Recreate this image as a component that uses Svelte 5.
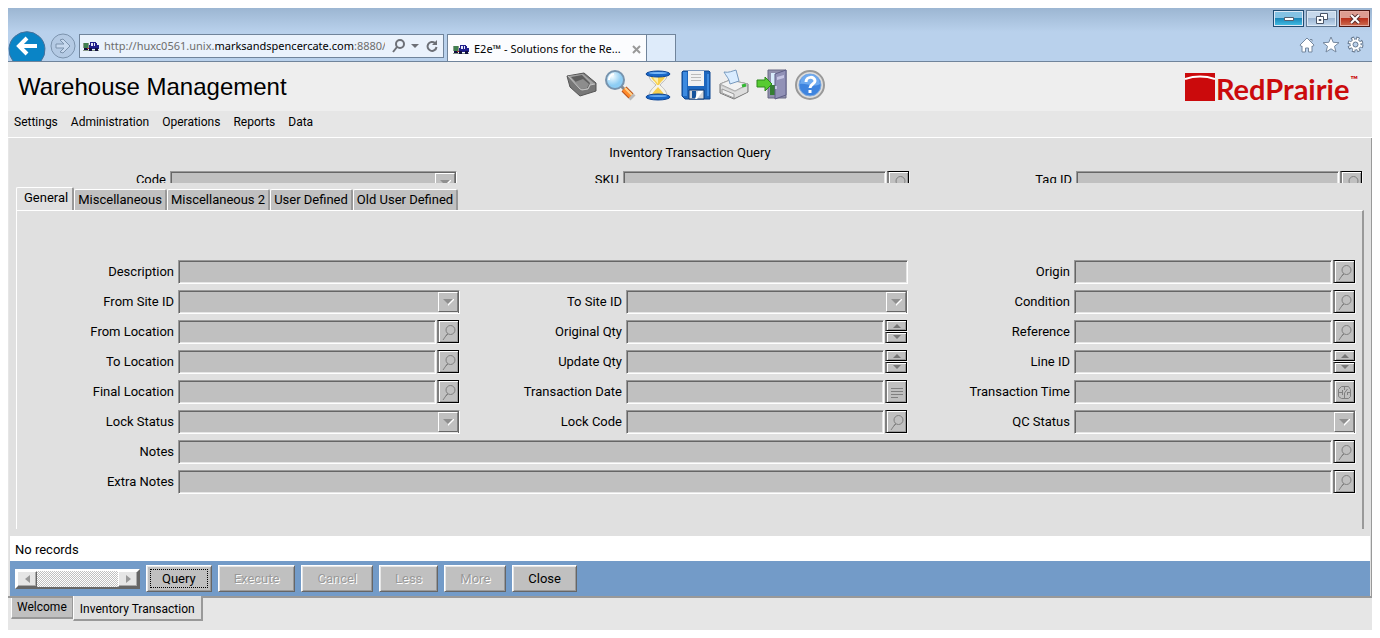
<script>
  const searchFields = [
    { id: 'code', label: 'Code', kind: 'select' },
    { id: 'sku', label: 'SKU', kind: 'lookup' },
    { id: 'tag', label: 'Tag ID', kind: 'lookup' }
  ];
  const fields = [
    { id: 'description', label: 'Description', kind: 'text', span: 'half' },
    { id: 'origin', label: 'Origin', kind: 'lookup' },
    { id: 'from-site', label: 'From Site ID', kind: 'select' },
    { id: 'to-site', label: 'To Site ID', kind: 'select' },
    { id: 'condition', label: 'Condition', kind: 'lookup' },
    { id: 'from-location', label: 'From Location', kind: 'lookup' },
    { id: 'original-qty', label: 'Original Qty', kind: 'spin' },
    { id: 'reference', label: 'Reference', kind: 'lookup' },
    { id: 'to-location', label: 'To Location', kind: 'lookup' },
    { id: 'update-qty', label: 'Update Qty', kind: 'spin' },
    { id: 'line', label: 'Line ID', kind: 'spin' },
    { id: 'final-location', label: 'Final Location', kind: 'lookup' },
    { id: 'date', label: 'Transaction Date', kind: 'date' },
    { id: 'time', label: 'Transaction Time', kind: 'time' },
    { id: 'lock-status', label: 'Lock Status', kind: 'select' },
    { id: 'lock-code', label: 'Lock Code', kind: 'lookup' },
    { id: 'qc-status', label: 'QC Status', kind: 'select' },
    { id: 'notes', label: 'Notes', kind: 'lookup', span: 'full' },
    { id: 'extra-notes', label: 'Extra Notes', kind: 'lookup', span: 'full' }
  ];
  const menus = ['Settings', 'Administration', 'Operations', 'Reports', 'Data'];
  const tabs = ['General', 'Miscellaneous', 'Miscellaneous 2', 'User Defined', 'Old User Defined'];
  const actions = [
    { label: 'Query', focused: true },
    { label: 'Execute', disabled: true },
    { label: 'Cancel', disabled: true },
    { label: 'Less', disabled: true },
    { label: 'More', disabled: true },
    { label: 'Close' }
  ];
</script>

{#snippet truck()}
  <svg class="truck" width="16" height="12" viewBox="0 0 16 12" shape-rendering="crispEdges">
    <path fill="#3f7f4f" d="M1 3h4v5H1z" />
    <path fill="#8a9a8a" d="M0 3h1v5H0zM5 3h1v5H5zM0 10h16v1H0z" />
    <path fill="#20208c" d="M7 2h6v1h1v2h2v4H6V5h1z" />
    <path fill="#e8e8f8" d="M8 3h2v3H8zM11 3h1v3h-1z" />
    <path fill="#101040" d="M1 8h4v2H1zM6 8h3v3H6zM12 8h3v3h-3z" />
    <path fill="#a33" d="M4 8h2v1H4z" />
  </svg>
{/snippet}

{#snippet glass()}
  <svg width="18" height="18" viewBox="0 0 18 18" fill="none" stroke="#808080">
    <circle cx="10.5" cy="7" r="4.5" /><path d="M7.5 10.5 3 17M8 11l-2 2" />
  </svg>
{/snippet}

{#snippet field(f)}
  <label for={f.id}>{f.label}</label>
  <div class="control {f.span ?? ''}">
    {#if f.kind === 'select'}
      <select id={f.id} class="sunken"></select>
      <span class="arrow">
        <svg width="14" height="10" viewBox="0 0 14 10"><path fill="#fff" d="m7 9 6-6v-1h-2L7 6z" /><path fill="#8f8f8f" d="M2 2h10L7 7z" /></svg>
      </span>
    {:else}
      <input id={f.id} class="sunken" type="text" />
      {#if f.kind === 'spin'}
        <span class="spin">
          <button class="raised" aria-label="Increase {f.label}"><svg width="10" height="5" viewBox="0 0 10 5"><path fill="#777" d="M1 5h8L5 1z" /></svg></button>
          <button class="raised" aria-label="Decrease {f.label}"><svg width="10" height="5" viewBox="0 0 10 5"><path fill="#777" d="M1 0h8L5 4z" /></svg></button>
        </span>
      {:else if f.kind === 'date'}
        <button class="raised" aria-label="Choose {f.label}">
          <svg width="18" height="18" viewBox="0 0 18 18" stroke="#808080"><path d="M3 5.500h12M3 8.500h12M3 11.500h12M3 14.500h7" /></svg>
        </button>
      {:else if f.kind === 'time'}
        <button class="raised" aria-label="Choose {f.label}">
          <svg width="18" height="18" viewBox="0 0 18 18" fill="none" stroke="#808080"><path d="M5.500 3.500h7l2 3v7l-2 2h-7l-3-2v-7zM8.500 4v3M8.500 16v-6l3-4M3 9.500h3M11 9.500h4M6.500 7v5M11.500 9v3" /></svg>
        </button>
      {:else if f.kind === 'lookup'}
        <button class="raised" aria-label="Look up {f.label}">{@render glass()}</button>
      {/if}
    {/if}
  </div>
{/snippet}

<div class="window">
  <div class="chrome">
    <div class="navigation">
      <button class="back" aria-label="Back">
        <svg width="38" height="34" viewBox="0 0 38 34"><path fill="#0a84c6" stroke="#46729c" d="M5 34a18 18 0 1 1 28 0" /><path fill="none" stroke="#fff" stroke-width="4" d="m19 11-8 8 8 8M11 19h18" /></svg>
      </button>
      <button class="forward" aria-label="Forward">
        <svg width="26" height="26" viewBox="0 0 26 26" fill="none"><circle cx="13" cy="13" r="12" fill="#b4cae4" stroke="#7c93ad" /><path fill="#c7d9ef" stroke="#7c93ad" d="M6 11h8l-4-4 3-1 7 7-7 7-3-1 4-4H6z" /></svg>
      </button>
      <div class="address">
        {@render truck()}
        <div class="url">http://huxc0561.unix.<b>marksandspencercate.com</b>:8880/</div>
        <svg width="50" height="16" viewBox="0 0 50 16" fill="none" stroke="#6d7077" stroke-width="2"><circle cx="10" cy="6" r="4" /><path d="m7 9-4 5" /><path fill="#6d7077" stroke="none" d="M21 6h8l-4 4z" /><path d="M45 5A4.500 4.500 0 1 0 46.500 9" /><path fill="#6d7077" stroke="none" d="M42 7h5V2z" /></svg>
      </div>
      <div class="page-tab">
        {@render truck()}
        <span>E2e™ - Solutions for the Re...</span>
        <button class="bare" aria-label="Close tab"><svg width="9" height="9" viewBox="0 0 9 9" stroke="#999" stroke-width="2"><path d="m1 1 7 7M8 1 1 8" /></svg></button>
      </div>
      <button class="new-tab" aria-label="New tab"></button>
    </div>
    <div class="corner">
      <div class="window-buttons">
        <button class="minimise" aria-label="Minimise"><svg width="12" height="6" viewBox="0 0 12 6"><path fill="#fff" stroke="#555f70" d="M1.500 1.500h9v3h-9z" /></svg></button>
        <button aria-label="Restore"><svg width="12" height="11" viewBox="0 0 12 11" fill="#fff" stroke="#4a5568"><path d="M4.500.5h7v6h-7z" /><path d="M.5 3.500h7v7h-7zM3 6.500h2v1H3z" /></svg></button>
        <button class="close" aria-label="Close window"><svg width="12" height="10" viewBox="0 0 12 10"><path stroke="#5b3030" stroke-width="4" d="m2 1 8 8M10 1 2 9" /><path stroke="#fff" stroke-width="2" d="m2 1 8 8M10 1 2 9" /></svg></button>
      </div>
      <div class="tools">
        <button class="bare" aria-label="Home"><svg width="16" height="16" viewBox="0 0 16 16" fill="#fff" stroke="#75889f"><path d="m8 1 7 7-1 1.500-1-.5v6H9.500v-4h-3v4H3V9l-1 .5L1 8zM11 2.500h2v2" /></svg></button>
        <button class="bare" aria-label="Favourites"><svg width="18" height="17" viewBox="0 0 18 17" fill="#fff" stroke="#75889f"><path d="m9 1 2.200 5.300 5.800.4-4.500 3.600 1.500 5.700L9 12.800 4 16l1.500-5.700L1 6.700l5.800-.4z" /></svg></button>
        <button class="bare" aria-label="Tools"><svg width="17" height="17" viewBox="0 0 17 17"><circle cx="8.500" cy="8.500" r="6" fill="none" stroke="#65788f" stroke-width="4" stroke-dasharray="2.900 1.810" /><circle cx="8.500" cy="8.500" r="5.500" fill="#fff" stroke="#65788f" /><circle cx="8.500" cy="8.500" r="5.500" fill="none" stroke="#fff" stroke-width="3" stroke-dasharray="1.500 2.820" stroke-dashoffset="-.7" /><circle cx="8.500" cy="8.500" r="2.500" fill="#b9d0ea" stroke="#65788f" /></svg></button>
      </div>
    </div>
  </div>

  <header>
    <h1>Warehouse Management</h1>
    <div class="toolbar">
      <button class="bare" aria-label="Inbox">
        <svg width="32" height="32" viewBox="0 0 32 32"><path fill="#777" stroke="#555" d="m1 7 17-3 12 10v8l-16 5L4 18z" /><path fill="#a4a4a4" d="m2 7 15-2 12 10-5 1-2 4-6 1-2-2z" /><path fill="#5e5e5e" d="m5 8 11-2 8 8-2 5-6 1z" /><path fill="#8d8d8d" d="m9 13 8-3 6 5-2 4-5 1z" /><path fill="none" stroke="#c4c4c4" d="m2 7 12 13 2 1 6-1 2-4 5-1" /></svg>
      </button>
      <button class="bare" aria-label="Search">
        <svg width="32" height="32" viewBox="0 0 32 32"><defs><radialGradient id="lens" cx=".35" cy=".3"><stop offset="0" stop-color="#f4fcff" /><stop offset="1" stop-color="#8dcdf4" /></radialGradient></defs><path stroke="#888" stroke-width="3" d="m17 17 4 4" /><path stroke="#b5501c" stroke-width="7" d="m20 20 7 7" /><path stroke="#ff8a2a" stroke-width="5" d="m20 20 7 7" /><path stroke="#ffd08a" stroke-width="2" d="m21 19 7 7" /><path stroke="#b9b9b9" stroke-width="7" d="m27 27 2 2" /><circle cx="11" cy="11" r="9" fill="url(#lens)" stroke="#7793ad" stroke-width="2" /><path fill="none" stroke="#fff" stroke-width="2" d="M5 11a6 6 0 0 1 5-6" /></svg>
      </button>
      <button class="bare" aria-label="Pending">
        <svg width="32" height="32" viewBox="0 0 32 32"><path fill="#f5f3e8" stroke="#bbb" d="M7 6h18c0 5-5 7-7 10 3 3 7 6 7 11H7c0-5 4-8 7-11-3-3-7-5-7-10z" /><path fill="#f7cf4d" d="M9 8h14c-1 3-4 4-6 8h-2c-2-4-5-5-6-8zM16 18c2 3 6 5 6 9H10c0-4 4-6 6-9z" /><path fill="#ffefa8" d="M11 8h5v7c-2-3-4-4-5-7z" /><ellipse cx="16" cy="5" rx="12" ry="3" fill="#1766c8" stroke="#0c4596" /><ellipse cx="16" cy="4" rx="9" ry="1" fill="#79b8f8" /><ellipse cx="16" cy="28" rx="12" ry="3" fill="#1766c8" stroke="#0c4596" /><ellipse cx="16" cy="27" rx="9" ry="1" fill="#64a9ef" /></svg>
      </button>
      <button class="bare" aria-label="Save">
        <svg width="32" height="32" viewBox="0 0 32 32"><path fill="#1d66bd" stroke="#0d458f" d="M3 2h26l1 1v27H5l-3-3V3z" /><path fill="#3c8ae0" d="M3 3h4v24H3zM27 5h2v22h-2z" /><path fill="#f1f1f1" d="M8 2h16v15H8z" /><path stroke="#bbb" d="M11 5.500h10M11 8.500h10M11 11.500h10" /><path fill="#d4d7dc" stroke="#0d3974" d="M9 21h15v9H9z" /><path fill="#16539c" d="M12 22h4v7h-4z" /><path fill="#fff" d="m18 22 5 0-6 8h-2z" /></svg>
      </button>
      <button class="bare" aria-label="Print">
        <svg width="32" height="32" viewBox="0 0 32 32"><path fill="#c8c8c8" stroke="#777" d="m2 15 10-4 18 4v8l-14 7L2 24z" /><path fill="#f2f2f2" stroke="#aaa" d="m2 15 10-4 18 4-13 7z" /><path fill="#d9ecff" stroke="#7799bd" d="M6 3c5 1 8-1 12-2l3 11-9 3c-1-6-4-8-6-12z" /><path fill="#ddd" d="m3 17 14 6 12-6v6l-13 6-13-5z" /><path fill="#efefef" stroke="#999" d="m4 20 12 5v4L4 24z" /><path stroke="#33b833" stroke-width="3" d="m24 17 4-1" /></svg>
      </button>
      <button class="bare" aria-label="Exit">
        <svg width="32" height="32" viewBox="0 0 32 32"><path fill="#9090ac" stroke="#696984" d="M12 1h18v28H12z" /><path fill="#d8ecfb" d="M15 4h9v12h-9z" /><path fill="#357f33" d="M14 16h9v10h-9z" /><path fill="#9292b7" stroke="#5e5e86" d="m19 5 11-4v25l-11 4z" /><path fill="#c6c6e4" d="m21 8 7-2v3l-7 2zM19 17h2v3h-2z" /><path fill="#57cb31" stroke="#2d871c" d="M1 11h8V8l7 7-7 7v-4H1z" /></svg>
      </button>
      <button class="bare" aria-label="Help">
        <svg width="32" height="32" viewBox="0 0 32 32"><circle cx="16" cy="16" r="14" fill="#ddd" stroke="#999" stroke-width="2" /><circle cx="16" cy="16" r="11" fill="#3e84df" stroke="#7da9de" /><path fill="#6eaaf0" d="M6 15a10 10 0 0 1 20 0c-6 4-14-1-20 0z" /><path fill="none" stroke="#fff" stroke-width="3" d="M12 13c0-6 9-6 9-1 0 3-5 3-5 7M16 21v3" /></svg>
      </button>
    </div>
    <div class="logo">
      <svg width="30" height="28" viewBox="0 0 30 28"><path fill="#cb0a0c" d="M0 0h30v28H0z" /><path fill="none" stroke="#fff" stroke-width="2" d="M0 6Q15 1 30 6" /></svg>
      <span>RedPrairie</span><sup>™</sup>
    </div>
  </header>

  <nav class="menu">
    {#each menus as menu}<button class="bare">{menu}</button>{/each}
  </nav>

  <main>
    <h2>Inventory Transaction Query</h2>
    <div class="search-row">
      {#each searchFields as f}{@render field(f)}{/each}
    </div>
    <div class="tabs" role="tablist">
      {#each tabs as tab, i}<button role="tab" aria-selected={i === 0} class:active={i === 0}>{tab}</button>{/each}
    </div>
    <div class="sheet" role="tabpanel">
      {#each fields as f}{@render field(f)}{/each}
    </div>
    <div class="status">No records</div>
    <div class="actions">
      <div class="scroller">
        <button aria-label="Scroll left"><svg width="5" height="8" viewBox="0 0 5 8"><path fill="#999" d="M5 0v8L0 4z" /></svg></button>
        <button aria-label="Scroll right"><svg width="5" height="8" viewBox="0 0 5 8"><path fill="#999" d="M0 0v8l5-4z" /></svg></button>
      </div>
      {#each actions as a}
        <button class="action" class:focused={a.focused} disabled={a.disabled}>{a.label}</button>
      {/each}
    </div>
  </main>

  <footer>
    <button>Welcome</button>
    <button class="active">Inventory Transaction</button>
  </footer>
</div>

<style>
  :global(body) { background: #fff; }
  * { box-sizing: border-box; }
  .window {
    margin: 8px;
    background: #e6e6e6;
    color: #000;
    font-family: Roboto, 'Liberation Sans', sans-serif;
    font-size: 13px;
    line-height: 18px;
  }
  button { margin: 0; padding: 0; font: inherit; color: inherit; border-radius: 0; }
  svg { display: block; flex: none; }
  .bare { border: 0; background: none; }

  .chrome {
    display: flex;
    justify-content: space-between;
    height: 54px;
    border-bottom: 1px solid #70849b;
    background: linear-gradient(#9cb6d2, #b9d1ec 24px);
    font-family: 'Noto Sans', sans-serif;
    font-size: 11px;
  }
  .navigation { display: flex; align-items: flex-end; min-width: 0; }
  .back { width: 40px; border: 0; background: none; }
  .forward { border: 0; background: none; margin: 0 3px 2px 2px; }
  .address {
    display: flex;
    align-items: center;
    gap: 5px;
    width: 365px;
    height: 24px;
    margin-bottom: 3px;
    padding: 0 3px;
    border: 1px solid #70849b;
    background: #eaf2fc;
  }
  .url { flex: 1; overflow: hidden; white-space: nowrap; color: #6d6d6d; }
  .url b { font-weight: 400; color: #000; }
  .page-tab {
    display: flex;
    align-items: center;
    gap: 5px;
    width: 200px;
    height: 27px;
    margin-left: 3px;
    padding: 2px 5px 0;
    border: 1px solid #70849b;
    border-bottom: 0;
    background: #fbfcfe;
  }
  .page-tab span { flex: 1; white-space: nowrap; }
  .new-tab { width: 29px; height: 27px; border: 1px solid #70849b; border-width: 1px 1px 0 0; background: #deebfa; }
  .corner { display: flex; flex-direction: column; align-items: flex-end; gap: 9px; padding: 2px 2px 0; }
  .window-buttons { display: flex; gap: 2px; }
  .window-buttons button {
    display: grid;
    place-items: center;
    width: 31px;
    height: 17px;
    border: 1px solid #5f7893;
    background: linear-gradient(#c6d8eb 45%, #9bb5d2 50%, #c5daf0);
    box-shadow: inset 0 0 0 1px #dce8f5;
  }
  .window-buttons .minimise { background: linear-gradient(#84c2e4 45%, #1b86b8 50%, #45c2e8); border-color: #1f4c73; }
  .window-buttons .close { background: linear-gradient(#dd9c91 45%, #b9301c 50%, #cd6d50); border-color: #4c1713; box-shadow: inset 0 0 0 1px #e5aaa0; }
  .tools { display: flex; align-items: center; gap: 7px; padding-right: 6px; }

  header {
    display: grid;
    grid-template-columns: 1fr auto 1fr;
    align-items: center;
    height: 49px;
    padding: 0 14px 0 10px;
    background: #eee;
  }
  h1 { margin: 0; font: 400 24px/32px 'Liberation Sans', sans-serif; white-space: nowrap; }
  .toolbar { display: flex; gap: 6px; margin: 0 0 4px 16px; }
  .logo { display: flex; justify-content: flex-end; align-items: center; gap: 1px; color: #cb0a0c; font: 700 29px/32px Lato, sans-serif; }
  .logo span { padding-top: 4px; }
  .logo sup { align-self: flex-start; font-size: 10px; line-height: 20px; }

  .menu { display: flex; gap: 13px; height: 27px; padding: 0 6px 4px; border-bottom: 1px solid #fff; font-size: 12px; }

  main { margin-left: 1px; background: #e0e0e0; border-right: 1px solid #999; }
  h2 { margin: 0; padding: 6px 0; height: 33px; font: inherit; text-align: center; }
  .search-row, .sheet {
    display: grid;
    grid-template-columns: 157px 1fr 158px 1fr 158px 1fr;
    grid-auto-rows: 24px;
    column-gap: 4px;
  }
  .search-row { height: 12px; overflow: hidden; padding-right: 8px; }
  label { text-align: right; line-height: 24px; white-space: nowrap; }
  .search-row label { line-height: 18px; }
  .control { display: flex; min-width: 0; position: relative; }
  .half { grid-column: span 3; }
  .full { grid-column: span 5; }
  .sunken {
    flex: 1;
    min-width: 0;
    height: 24px;
    margin: 0;
    padding: 0 4px;
    appearance: none;
    border: 1px solid;
    border-color: #999 #fff #fff #999;
    border-radius: 0;
    background: #c0c0c0;
    box-shadow: inset 1px 1px #666, inset -1px -1px #e6e6e6;
    font: inherit;
    outline: 0;
  }
  select.sunken { box-shadow: inset 1px 1px #666, inset -1px 0 #666, inset 0 -1px #e6e6e6; }
  .arrow {
    position: absolute;
    right: 2px;
    top: 2px;
    display: grid;
    place-items: center;
    width: 20px;
    height: 20px;
    border: 1px solid;
    border-color: #fff #808080 #666 #fff;
    background: #c0c0c0;
    pointer-events: none;
  }
  .raised {
    display: grid;
    place-items: center;
    width: 22px;
    height: 23px;
    border: solid;
    border-width: 1px 1px 1px 2px;
    border-color: #000 #000 #000 #808080;
    background: #c0c0c0;
    box-shadow: inset 1px 1px #fff, inset -1px -1px #999, 1px 1px #f4f4f4;
    margin: 0 1px;
    overflow: hidden;
  }
  .spin { display: grid; gap: 1px; height: 23px; }
  .spin .raised { height: 11px; }

  .tabs { display: flex; align-items: flex-end; height: 27px; padding: 4px 7px 0; }
  .tabs button {
    height: 21px;
    padding: 0 3px;
    border: solid;
    border-width: 1px 2px 0 1px;
    border-color: #fff #999 #fff #fff;
    border-radius: 2px 2px 0 0;
    background: #c0c0c0;
    white-space: nowrap;
  }
  .tabs .active { height: 23px; padding: 0 4px 3px 7px; background: #e0e0e0; }
  .sheet {
    row-gap: 6px;
    margin: 0 7px 7px;
    padding: 49px 6px 35px 0;
    border: solid;
    border-width: 1px 2px 0 1px;
    border-color: #fff #999 #fff #fff;
  }
  .status { margin: 0 1px; padding: 5px; height: 25px; background: #fff; }
  .actions { display: flex; align-items: center; gap: 6px; height: 35px; margin: 0 1px; padding: 0 5px; background: #739bc8; }
  .scroller {
    display: flex;
    justify-content: space-between;
    width: 125px;
    height: 20px;
    border: 2px solid;
    border-color: #fff #666 #666 #fff;
    background: repeating-conic-gradient(#c0c0c0 0 25%, #fff 0 50%) 0 0 / 2px 2px;
  }
  .scroller button {
    display: grid;
    place-items: center;
    width: 20px;
    border: 1px solid;
    border-color: #fff #666 #666 #fff;
    background: #e6e6e6;
    box-shadow: inset -1px -1px #aaa;
  }
  .action {
    height: 27px;
    padding: 0 15px;
    border: 1px solid;
    border-color: #fff #666 #666 #fff;
    background: #c0c0c0;
    box-shadow: inset 1px 1px #e6e6e6, inset -1px -1px #999;
  }
  .action:disabled { color: #999; text-shadow: 1px 1px #fff; }
  .focused { outline: 1px dotted #000; outline-offset: -5px; }

  footer { display: flex; align-items: flex-start; height: 34px; padding-left: 3px; border-top: 2px solid #999; font-size: 12px; }
  footer button {
    height: 21px;
    padding: 0 5px 3px;
    border: solid;
    border-width: 0 1px 2px 1px;
    border-color: #999 #999 #999 #fff;
    background: #c0c0c0;
  }
  footer .active { height: 25px; margin-top: -2px; padding: 2px 6px 0; border-right-width: 2px; background: #e0e0e0; }
</style>
